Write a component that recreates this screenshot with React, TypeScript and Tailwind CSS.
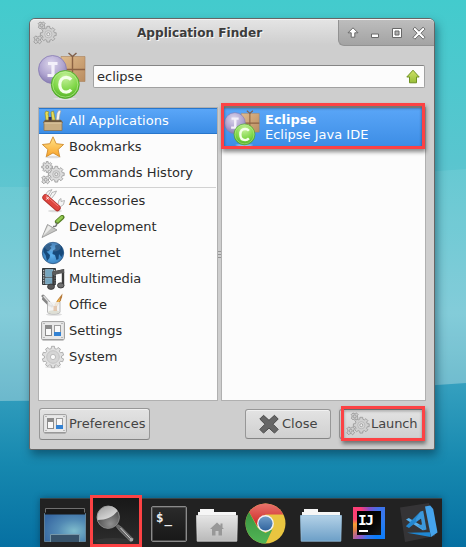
import React from "react";

function gearPath(cx: number, cy: number, outer: number, inner: number, teeth: number) {
  const pts: string[] = [];
  const step = (Math.PI * 2) / teeth;
  for (let i = 0; i < teeth; i++) {
    const a = i * step - Math.PI / 2;
    const corners: [number, number][] = [
      [-0.32, inner],
      [-0.22, outer],
      [0.22, outer],
      [0.32, inner],
    ];
    for (const [f, r] of corners) {
      pts.push(`${(cx + Math.cos(a + f * step) * r).toFixed(2)} ${(cy + Math.sin(a + f * step) * r).toFixed(2)}`);
    }
  }
  return `M${pts.join("L")}Z`;
}

function Gears({ dim = false }: { dim?: boolean }) {
  const top = dim ? { x: 8.7, y: 4.4, r: 3.9 } : { x: 6.2, y: 6, r: 5.5 };
  return (
    <svg width="24" height="24" viewBox="0 0 24 24" className="shrink-0">
      <g fill={dim ? "#cfcfcf" : "#dcdcdc"} stroke="#959595" strokeWidth=".8" strokeLinejoin="round">
        <path d={gearPath(15.3, 13.2, 8, 6.2, 8)} />
        <circle cx="15.3" cy="13.2" r="3.6" fill="#d8d8d8" stroke="#b4b4b4" />
        <circle cx="15.3" cy="13.2" r="1.5" fill="#f0f0f0" />
        <path d={gearPath(top.x, top.y, top.r, top.r * 0.72, dim ? 4 : 8)} transform={dim ? `rotate(45 ${top.x} ${top.y})` : undefined} />
        <circle cx={top.x} cy={top.y} r="1.5" />
        <path d={gearPath(4.7, 18.8, 4.4, 2.9, 4)} transform="rotate(45 4.7 18.8)" />
        <circle cx="4.7" cy="18.8" r="1.5" />
      </g>
    </svg>
  );
}

function EclipseIcon({ size }: { size: number }) {
  return (
    <svg width={size} height={size} viewBox="0 0 48 48" className="shrink-0">
      <defs>
        <radialGradient id="ecPurple" cx=".45" cy=".3" r=".75">
          <stop offset="0" stopColor="#dcd6ec" />
          <stop offset=".6" stopColor="#aea3cf" />
          <stop offset="1" stopColor="#7d72ab" />
        </radialGradient>
        <radialGradient id="ecGreen" cx=".5" cy=".25" r=".8">
          <stop offset="0" stopColor="#c6f19b" />
          <stop offset=".6" stopColor="#7cd544" />
          <stop offset="1" stopColor="#48a41e" />
        </radialGradient>
        <linearGradient id="ecBox" x1="0" y1="0" x2="1" y2="1">
          <stop offset="0" stopColor="#e0bb8c" />
          <stop offset="1" stopColor="#b98c60" />
        </linearGradient>
      </defs>
      <path d="M23 4.5h24v25H23z" fill="url(#ecBox)" stroke="#a9825b" strokeWidth=".6" />
      <path d="M23 17.5h24M34.5 4v25" stroke="#8c6243" strokeWidth="1.4" />
      <path d="M34.5 4.5l-4-3.5M34.5 4.5l4-3.5" stroke="#80604b" strokeWidth="1.5" />
      <circle cx="14.5" cy="17.5" r="14" fill="url(#ecPurple)" stroke="#877bb2" strokeWidth=".8" />
      <path d="M10 11.5h9.5M15 11v13M9.5 23.5h6.5" stroke="#f3f0fa" strokeWidth="3.2" fill="none" />
      <ellipse cx="27" cy="46.8" rx="12" ry="1.2" fill="#fff" opacity=".45" />
      <circle cx="27.3" cy="32.5" r="14" fill="url(#ecGreen)" stroke="#4ea52a" strokeWidth=".8" />
      <circle cx="27.3" cy="32.5" r="12.6" fill="none" stroke="#c5f3a2" strokeOpacity=".6" />
      <path d="M33.2 27.6c-1.4-1.6-3-2.3-5-2.3-4.2 0-6.4 3.2-6.4 7.4s2.2 7.4 6.4 7.4c2 0 3.6-.7 5-2.3" stroke="#f4ffe9" strokeWidth="3.2" fill="none" />
    </svg>
  );
}

function SettingsIcon() {
  return (
    <svg width="24" height="24" viewBox="0 0 24 24" className="shrink-0">
      <rect x=".6" y="2.6" width="22.8" height="18" rx="1" fill="#e8e8e8" stroke="#9b9b9b" />
      <path d="M1.5 21.2h21" stroke="#777" strokeOpacity=".5" />
      <rect x="4.5" y="6.5" width="6" height="10" fill="#f9f9f9" stroke="#8c8c8c" />
      <path d="M5 7h5v3H5z" fill="#8b8b8b" />
      <rect x="13.5" y="6.5" width="6" height="10" fill="#f9f9f9" stroke="#9c9c9c" />
      <path d="M13 13h7v4h-7z" fill="#3382d3" />
      <path d="M2.5 4.5h1m17 0h1m-19 14h1m17 0h1" stroke="#888" />
    </svg>
  );
}

function CategoryIcon({ name }: { name: string }) {
  if (name === "Settings") return <SettingsIcon />;
  if (name === "Commands History") return <Gears />;
  return (
    <svg width="24" height="24" viewBox="0 0 24 24" className="shrink-0">
      {name === "All Applications" && (
        <g>
          <path d="M4 4l1-2 3 1-1 2 2 7H5z" fill="#e6dc55" stroke="#8c831f" strokeWidth=".6" />
          <path d="M10 3l2.5-1 2 10H11z" fill="#e6dc55" stroke="#8c831f" strokeWidth=".6" />
          <path d="M15 12l1-8 2-3 2 1-1 3-1 7z" fill="#f2f2ed" stroke="#999" strokeWidth=".6" />
          <path d="M7.5 8h3v5h-3z" fill="#312c62" />
          <path d="M4 11.2h16l1.5 2.3h-19z" fill="#55452f" stroke="#7a6242" strokeWidth=".7" />
          <path d="M3 13h18v8.5H3z" fill="#c7ae83" stroke="#8d7550" strokeWidth=".8" />
          <path d="M3.5 14h17" stroke="#e1cea7" />
        </g>
      )}
      {name === "Bookmarks" && (
        <g>
          <defs>
            <linearGradient id="star" x1="0" y1="0" x2="0" y2="1">
              <stop offset="0" stopColor="#ffe58a" />
              <stop offset="1" stopColor="#f9a32a" />
            </linearGradient>
          </defs>
          <ellipse cx="12" cy="22" rx="8" ry="1.3" fill="#ddd" />
          <path d="M12 1.8l3.2 6.9 7.4.8-5.5 5 1.6 7.2-6.7-3.8-6.7 3.8 1.6-7.2-5.5-5 7.4-.8z" fill="url(#star)" stroke="#cf8b2d" strokeWidth=".9" strokeLinejoin="round" />
        </g>
      )}
      {name === "Accessories" && (
        <g>
          <ellipse cx="14" cy="22" rx="7" ry="1.3" fill="#ddd" />
          <path d="M4 6L7 2.2l4-1.6-2 3L7 7M9 7.5l2-4 4.5-1.5-1.5 3-3.5 4.5M17 15l1-4 2-1.5v3l3.5-1-1 4-4 3" fill="#f4f4f4" stroke="#a6a6a6" strokeWidth=".8" />
          <path d="M4.5 8.5l12 10.5" stroke="#b23430" strokeWidth="6.4" strokeLinecap="round" />
          <path d="M4.6 8.3l11.8 10.3" stroke="#df453e" strokeWidth="5" strokeLinecap="round" />
          <path d="M5 6.5l12 10.5" stroke="#f3847e" strokeLinecap="round" />
          <path d="M5.4 8.2l2.4 2.2M7.6 8l-2.3 2.6" stroke="#fff" strokeWidth=".9" />
        </g>
      )}
      {name === "Development" && (
        <g>
          <path d="M16.2 6.8l5-4.6" stroke="#557f23" strokeWidth="4.6" strokeLinecap="round" />
          <path d="M16.4 6.2l4.4-4" stroke="#92c953" strokeWidth="2.6" strokeLinecap="round" />
          <path d="M12 11.5c3 .5 4-1 3.5-4" stroke="#777" strokeWidth="1.5" fill="none" />
          <path d="M1 22.5L6.5 9.5l9.5 5.5z" fill="#c5c5c3" stroke="#8f8f8f" strokeWidth=".8" strokeLinejoin="round" />
          <path d="M2 21L7.2 10.5l3.4 2.2z" fill="#ebebe9" />
        </g>
      )}
      {name === "Internet" && (
        <g>
          <defs>
            <radialGradient id="globe" cx=".45" cy=".6" r=".6">
              <stop offset="0" stopColor="#5fb4f0" />
              <stop offset="1" stopColor="#2d6fae" />
            </radialGradient>
          </defs>
          <circle cx="12" cy="12" r="10.7" fill="url(#globe)" stroke="#275380" strokeWidth=".8" />
          <path d="M2.5 8l3.5-4.500 4-1.300 1 1.800-2 1.500 1.500 1.500-2.500 3-2.500.500 3.500 3.500-.500 3-2.500 3-1.500-6-2-3zM14 4.500l4-1.500 3 3 1.500 6-2 4-2.500-3-.500 5-2 1-1.500-5-2.500-1 .500-3.500 2.500-1.500z" fill="#174a7b" />
          <ellipse cx="12" cy="6" rx="8" ry="4.500" fill="#fff" opacity=".13" />
        </g>
      )}
      {name === "Multimedia" && (
        <g>
          <path d="M1.500 1.500h13v16h-13z" fill="#474c50" stroke="#33383b" />
          <path d="M4.500 2.500h7.500v7h-7.500zM4.500 11h7.500v6h-7.500z" fill="#77a6bf" stroke="#9bc3d6" strokeWidth=".6" />
          <path d="M2.700 3v14M13.800 3v14" stroke="#ddd" strokeDasharray="1.200 1.300" />
          <path d="M12.500 19V5.500l9.500-2v14" fill="none" stroke="#3c3c3c" strokeWidth="2.400" />
          <path d="M11.500 6.500l11.500-2.500" stroke="#5b5b5b" strokeWidth="3.400" />
          <ellipse cx="10" cy="19.700" rx="3.500" ry="2.700" fill="#585858" stroke="#303030" strokeWidth=".8" />
          <ellipse cx="19.800" cy="18.400" rx="3.300" ry="2.600" fill="#707070" stroke="#303030" strokeWidth=".8" />
        </g>
      )}
      {name === "Office" && (
        <g>
          <ellipse cx="13" cy="21.500" rx="8" ry="1.300" fill="#ddd" />
          <path d="M2 3l9 10M2.500 6l6 6" stroke="#858585" strokeWidth="3" strokeLinecap="round" />
          <path d="M2.500 3l8 9" stroke="#ddd" strokeWidth="1.400" />
          <path d="M14.500 13l4.500-7" stroke="#b97725" strokeWidth="3.200" />
          <path d="M15 12l4-6" stroke="#f1b54f" strokeWidth="1.600" />
          <path d="M18 5l3.500-4.500-.500 4-1.500 3z" fill="#b77b3a" />
          <path d="M6.500 9v10c0 2.700 12.500 2.700 12.500 0V9" fill="#f1f1f1" fillOpacity=".85" stroke="#a6a6a6" strokeWidth=".8" />
          <ellipse cx="12.800" cy="19" rx="5.600" ry="1.700" fill="#dedfd5" />
          <path d="M12.500 13h3.500v5h-3.500z" fill="#e0bda0" opacity=".8" />
        </g>
      )}
      {name === "System" && (
        <g>
          <ellipse cx="12" cy="22" rx="8" ry="1.2" fill="#ddd" />
          <path d={gearPath(12, 12, 10.8, 8.6, 10)} fill="#e0e0e0" stroke="#a2a2a2" strokeWidth=".8" strokeLinejoin="round" />
          <circle cx="12" cy="12" r="6.3" fill="#d5d5d5" stroke="#c4c4c4" />
          <circle cx="12" cy="12" r="2.6" fill="#fafafa" stroke="#b0b0b0" strokeWidth=".8" />
        </g>
      )}
    </svg>
  );
}

const groups = [
  ["All Applications", "Bookmarks", "Commands History"],
  ["Accessories", "Development", "Internet", "Multimedia", "Office", "Settings", "System"],
];

function Category({ name }: { name: string }) {
  const active = name === "All Applications";
  return (
    <div
      className={
        active
          ? "flex h-[26px] items-center gap-[4px] border-y border-[#2876cb] bg-linear-to-b from-[#5aa6f8] to-[#3c8de5] pl-[2px] text-white"
          : "flex h-[26px] items-center gap-[4px] pl-[2px] text-[#2b2b2b]"
      }
    >
      <CategoryIcon name={name} />
      <span>{name}</span>
    </div>
  );
}

function TitleBar() {
  return (
    <div className="flex h-[26px] shrink-0 rounded-t-[5px] border-t border-[#f3f3f3] bg-linear-to-b from-[#e4e4e4] to-[#cecece]">
      <div className="w-[107px] shrink-0 pl-[3px] pt-px"><Gears dim /></div>
      <span className="pt-[4px] text-[12.1px] leading-[18px] font-bold whitespace-nowrap text-[#3c3c3c] [text-shadow:1px_1px_0_#f8f8f8]">
        Application Finder
      </span>
      <div className="ml-auto h-[26px] w-[96px] rounded-bl-[6px] rounded-tr-[4px] border-b border-l border-[#929292] bg-linear-to-b from-[#bdbdbd] to-[#a3a3a3]">
        <svg width="95" height="25" viewBox="0 0 95 25">
          <g fill="#fff" stroke="#686868" strokeWidth="1" strokeLinejoin="round">
            <path d="M14 7.8l5 5h-3.2v4.400h-3.600v-4.400H9z" />
            <rect x="32.5" y="14" width="7" height="3.5" />
            <path fillRule="evenodd" d="M53.5 8.500h9v9h-9zM56 11h4v4h-4z" />
            <path d="M75.900 7.200l4.100 4 4.100-4 1.900 1.900-4 4.100 4 4.100-1.900 1.900-4.100-4-4.100 4-1.900-1.900 4-4.100-4-4.100z" />
          </g>
        </svg>
      </div>
    </div>
  );
}

const button =
  "flex items-center rounded-[3px] border border-[#979797] border-b-[#858585] bg-linear-to-b from-[#e3e3e3] to-[#d0d0d0] text-[#444] shadow-[inset_0_1px_0_#f1f1f1]";

function FinderWindow() {
  return (
    <main className="mt-[18px] ml-[29px] flex h-[432px] w-[406px] flex-col rounded-t-[6px] rounded-b-[2px] border border-[#666] bg-[#cecece] shadow-[2px_5px_10px_rgba(0,40,60,0.5)]">
      <TitleBar />
      <div className="flex h-[62px] shrink-0 items-start gap-[7px] pt-[7px] pl-[8px]">
        <EclipseIcon size={48} />
        <div className="mt-[13px] flex h-[23px] w-[332px] items-center justify-between rounded-[2px] border border-[#a1a1a1] border-t-[#858585] bg-[#fcfcfc] pr-[3px] pl-[3px] text-[#2b2b2b]">
          <span>eclipse</span>
          <svg width="16" height="16" viewBox="0 0 16 16">
            <defs>
              <linearGradient id="arrow" x1="0" y1="0" x2="0" y2="1">
                <stop offset="0" stopColor="#cfe268" />
                <stop offset="1" stopColor="#98be38" />
              </linearGradient>
            </defs>
            <path d="M8 1.2l6.2 6.8h-2.700v5.800h-7v-5.800h-2.700z" fill="url(#arrow)" stroke="#6f9223" strokeLinejoin="round" />
          </svg>
        </div>
      </div>
      <div className="flex h-[294px] shrink-0 pl-[8px]">
        <div className="w-[180px] border border-[#b0b0b0] bg-[#fcfcfc]">
          {groups[0].map((name) => <Category key={name} name={name} />)}
          <div className="mx-px h-[2px] border-b border-[#d2d2d2]" />
          {groups[1].map((name) => <Category key={name} name={name} />)}
        </div>
        <div className="flex w-[3px] flex-col items-center justify-center gap-[2px]">
          <i className="h-px w-[3px] bg-[#969696]" />
          <i className="h-px w-[3px] bg-[#969696]" />
          <i className="h-px w-[3px] bg-[#969696]" />
        </div>
        <div className="w-[205px] border border-[#b0b0b0] bg-[#fcfcfc]">
          <div className="relative flex h-[39px] items-center bg-linear-to-b from-[#5aa6f8] to-[#3c8de5] pl-[2px] text-white">
            <EclipseIcon size={36} />
            <div className="-mt-[2px] ml-[5px] leading-[15px]">
              <div className="font-bold">Eclipse</div>
              <div>Eclipse Java IDE</div>
            </div>
            <div className="absolute -top-[5px] -left-px h-[46px] w-[204px] border-3 border-[#fc4244] shadow-[1px_3px_4px_rgba(0,0,0,0.45),inset_0_2px_3px_rgba(0,0,0,0.5)]" />
          </div>
        </div>
      </div>
      <div className="flex pt-[7px] pl-[9px]">
        <div className={`${button} h-[32px] w-[111px] pl-[3px]`}>
          <SettingsIcon /><span className="ml-[2px] -mt-px">Preferences</span>
        </div>
        <div className={`${button} mt-px ml-[95px] h-[30px] w-[86px] pl-[12px]`}>
          <svg width="22" height="22" viewBox="0 0 22 22" className="shrink-0">
            <path d="M5.500 2.300L11 7.300l5.500-5 3.700 3.700-5.200 5.200 5.200 5.200-3.700 3.700L11 15.100l-5.500 5-3.700-3.700L7 11.200 1.800 6z" fill="#666" stroke="#4b4b4b" strokeLinejoin="round" />
          </svg>
          <span className="ml-[2px] -mt-px">Close</span>
        </div>
        <div className={`${button} relative mt-px ml-[8px] h-[30px] w-[86px] pl-[6px]`}>
          <Gears dim /><span className="ml-px -mt-px tracking-[-0.1px]">Launch</span>
          <div className="absolute -top-[4px] left-px h-[35px] w-[84px] border-3 border-[#fc4244] shadow-[1px_3px_4px_rgba(0,0,0,0.45),inset_0_2px_3px_rgba(0,0,0,0.35)]" />
        </div>
      </div>
    </main>
  );
}

function Folder({ home = false }: { home?: boolean }) {
  return (
    <svg width="42" height="35" viewBox="0 0 42 35" className="shrink-0">
      <defs>
        <linearGradient id="grayFolder" x1="0" y1="0" x2="0" y2="1">
          <stop offset="0" stopColor="#e5e5e5" /><stop offset="1" stopColor="#b9b9b9" />
        </linearGradient>
        <linearGradient id="blueFolder" x1="0" y1="0" x2="0" y2="1">
          <stop offset="0" stopColor="#b3d1e7" /><stop offset="1" stopColor="#6c9fc7" />
        </linearGradient>
      </defs>
      <path d="M2 10V5h2V2h14v3h22v6H2z" fill="#f6f6f6" />
      <path d="M.5 8.500h41l-.7 25.700H1.200z" fill={home ? "url(#grayFolder)" : "url(#blueFolder)"} stroke={home ? "#d8d8d8" : "#9bc3df"} strokeWidth=".8" />
      {home && <path d="M21 15.500l7 6.500h-2v6.500h-3.500V24h-3v4.500H16V22h-2zM24.500 16.500h2v4h-2z" fill="#989898" />}
    </svg>
  );
}

function Dock() {
  return (
    <footer className="mt-[48px] ml-[40px] flex h-[49px] w-[402px] items-start border-t border-[#384548] bg-[#222] shadow-[0_0_7px_rgba(0,20,40,0.4)]">
      <svg width="42" height="36" viewBox="0 0 42 36" className="mt-[8px] ml-[4px] shrink-0">
        <defs>
          <radialGradient id="desk" cx=".72" cy=".62" r=".8">
            <stop offset="0" stopColor="#7fbccc" /><stop offset=".5" stopColor="#528ab4" /><stop offset="1" stopColor="#3768a2" />
          </radialGradient>
        </defs>
        <path d="M1.500 7V1.500h39V7" fill="#191919" stroke="#707070" />
        <path d="M.5 6.500h41v28H.5z" fill="url(#desk)" stroke="#7ba4bd" strokeOpacity=".6" />
        <path d="M1 6.500h40" stroke="#191919" strokeWidth="2" />
        <path d="M6.500 35v-7.500h29V35" fill="#37536a" stroke="#7798a9" />
      </svg>
      <div className="z-10 ml-[4px] -mt-[4px] h-[52px] w-[52px] shrink-0 border-3 border-[#fc4244] bg-linear-to-b from-[#181818] to-[#2d2d2d]">
        <svg width="46" height="46" viewBox="0 0 46 46">
          <defs>
            <radialGradient id="lens" cx=".6" cy=".8" r=".7">
              <stop offset="0" stopColor="#909090" /><stop offset="1" stopColor="#484848" />
            </radialGradient>
            <linearGradient id="shine" x1="0" y1="0" x2=".7" y2="1">
              <stop offset="0" stopColor="#9a9a9a" /><stop offset="1" stopColor="#e2e2e2" />
            </linearGradient>
          </defs>
          <ellipse cx="20" cy="43" rx="18" ry="3" fill="#353535" />
          <path d="M23 28.300l1.700-1.700 4 2.700 11.600 11.700-2.700 2.700-11.400-11.300z" fill="#666" stroke="#888" strokeWidth=".6" />
          <path d="M27.500 30l10.800 11.500" stroke="#d0d0d0" strokeWidth="1" />
          <circle cx="38.500" cy="41.700" r="1.800" fill="#aaa" />
          <circle cx="15.200" cy="19.200" r="11.200" fill="url(#lens)" stroke="#8a8a8a" strokeWidth="1" />
          <path d="M4.500 22C2 9 19 3 24.500 13 20 19 13 22 4.500 22z" fill="url(#shine)" />
        </svg>
      </div>
      <div className="mt-[7px] ml-[9px] flex h-[36px] w-[36px] shrink-0 rounded-[2px] border border-[#8a8a8a] bg-linear-to-b from-[#2b2b2b] to-[#181818] pt-[4px] pl-[4px] font-['DejaVu_Sans_Mono',monospace] text-[12.500px] leading-[14px] font-bold text-[#eee] shadow-[inset_0_0_0_1px_#494949]">
        $<span className="pt-px pl-px">_</span>
      </div>
      <div className="mt-[8px] ml-[9px]"><Folder home /></div>
      <svg width="41" height="41" viewBox="0 0 41 41" className="mt-[4px] ml-[7px] shrink-0">
        <defs>
          <clipPath id="disk"><circle cx="20.5" cy="20.5" r="20" /></clipPath>
          <linearGradient id="chromeRed" x1="0" y1="0" x2="0" y2="1"><stop stopColor="#e8756d" /><stop offset="1" stopColor="#cd2422" /></linearGradient>
          <linearGradient id="chromeBlue" x1="0" y1="0" x2="0" y2="1"><stop stopColor="#6f9cc7" /><stop offset="1" stopColor="#31649e" /></linearGradient>
          <linearGradient id="chromeGreen" x1="0" y1="0" x2="0" y2="1"><stop stopColor="#3a9440" /><stop offset="1" stopColor="#52b556" /></linearGradient>
        </defs>
        <g clipPath="url(#disk)">
          <path d="M0 0h41v41H0z" fill="#e9c540" />
          <path d="M0 0h41v11.500H20.500l-8 12L4 9z" fill="url(#chromeRed)" />
          <path d="M4 9l8.800 16 7.700 5 7-4-7 15H0V9z" fill="url(#chromeGreen)" />
        </g>
        <circle cx="20.5" cy="20.5" r="8.4" fill="#f2f2f2" />
        <circle cx="20.5" cy="20.5" r="7" fill="url(#chromeBlue)" />
      </svg>
      <div className="mt-[8px] ml-[14px]"><Folder /></div>
      <div className="mt-[8px] ml-[11px] h-[32px] w-[32px] shrink-0 bg-[conic-gradient(from_0deg,#874ec8_0deg,#3f73ea_35deg,#2a7cf2_90deg,#087cfa_150deg,#3f73ea_190deg,#9a55c0_215deg,#e28045_245deg,#f5a030_265deg,#fb4470_285deg,#fd3c78_330deg,#874ec8_360deg)] p-[4px]">
        <div className="flex h-[24px] flex-col bg-linear-to-br from-black to-[#171717] pl-px font-['DejaVu_Sans_Mono',monospace] text-[14.500px] leading-[15px] font-bold tracking-[-1.500px] text-white">
          <span className="pt-[2px]">IJ</span>
          <i className="mt-[2px] ml-px h-[2px] w-[9px] shrink-0 bg-white" />
        </div>
      </div>
      <svg width="38" height="40" viewBox="0 0 38 40" className="mt-[4px] ml-[15px] shrink-0">
        <path d="M0 4.500L29 0l6 33-30 6z" fill="#353436" />
        <path d="M6 16.500l2.800-1.500 15 9-.6 3.500z" fill="#55aeea" />
        <path d="M5.800 23.300L20.500 8.500l1 6.500L9 25z" fill="#2487cf" />
        <path d="M20.500 8.500l2.700-.700 3.300 18.700-2.700.700-6.500-4.700 4.700-1-1-6-4.700 3-.300-2.800z" fill="#3b98dc" />
        <path d="M25 3.500l5.200-1 3 3.500 4.300 23.500-6.500 4.500z" fill="#45a4ec" />
        <path d="M7 29.700l23-.5.700 4.800z" fill="#1f87d2" />
      </svg>
    </footer>
  );
}

export default function App() {
  return (
    <div className="relative isolate flex h-[547px] w-[466px] flex-col overflow-hidden bg-[#65c4d1] font-['DejaVu_Sans',sans-serif] text-[13px] leading-[18px]">
      <svg className="absolute inset-0 -z-10" width="466" height="547" viewBox="0 0 466 547">
        <defs>
          <linearGradient id="sky" x1="0" y1="0" x2="0" y2="1">
            <stop offset="0" stopColor="#43cbcd" /><stop offset=".4" stopColor="#59c5cf" /><stop offset=".78" stopColor="#79c8d6" /><stop offset="1" stopColor="#60b3c8" />
          </linearGradient>
          <linearGradient id="sea" x1="0" y1="0" x2="0" y2="1">
            <stop offset="0" stopColor="#35a0bf" /><stop offset=".5" stopColor="#1688af" /><stop offset="1" stopColor="#0670a2" />
          </linearGradient>
        </defs>
        <path d="M0 0h466v402H0z" fill="url(#sky)" />
        <path d="M0 187Q230 187 466 169V402H0z" fill="#fff" opacity=".08" />
        <path d="M0 401Q230 400 466 383V547H0z" fill="url(#sea)" />
      </svg>
      <FinderWindow />
      <Dock />
    </div>
  );
}
